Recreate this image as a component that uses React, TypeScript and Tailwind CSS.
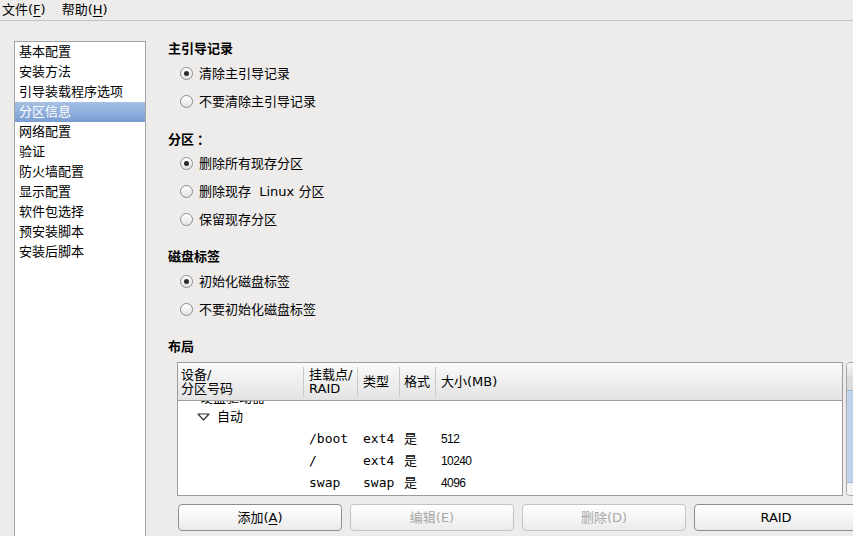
import React from 'react';

const FONT = '"DejaVu Sans", "Noto Sans CJK SC", sans-serif';

const navItems = [
  '基本配置',
  '安装方法',
  '引导装载程序选项',
  '分区信息',
  '网络配置',
  '验证',
  '防火墙配置',
  '显示配置',
  '软件包选择',
  '预安装脚本',
  '安装后脚本',
];

function Radio({ checked, label }: { checked?: boolean; label: string }) {
  return (
    <div className="h-[28px] flex items-center pl-[12px] gap-[6px]">
      <span className="w-[13px] h-[13px] rounded-full border border-[#8c8c8c] bg-gradient-to-b from-white to-[#e2e2e2] flex items-center justify-center">
        {checked && <span className="w-[5px] h-[5px] rounded-full bg-[#2a2a2a]" />}
      </span>
      <span className="text-[13px] leading-none text-black whitespace-pre">{label}</span>
    </div>
  );
}

function Heading({ children }: { children: React.ReactNode }) {
  return <div className="h-[20px] flex items-center text-[13px] font-bold text-black">{children}</div>;
}

function Mnemonic({ text, letter, after }: { text: string; letter: string; after: string }) {
  return (
    <span>
      {text}
      <span className="underline underline-offset-2">{letter}</span>
      {after}
    </span>
  );
}

function Button({ children, disabled }: { children: React.ReactNode; disabled?: boolean }) {
  return (
    <div
      className={`w-[164px] h-[27px] shrink-0 rounded-[4px] border flex items-center justify-center text-[13px] bg-gradient-to-b from-white to-[#ebebeb] ${
        disabled ? 'border-[#c4c4c4] text-[#a8a8a8]' : 'border-[#8e8e8e] text-black'
      }`}
    >
      {children}
    </div>
  );
}

const cols = ['w-[126px] pl-[3px]', 'w-[54px] pl-[5px]', 'w-[42px] pl-[5px]', 'w-[36px] pl-[4px]', 'flex-1 pl-[5px]'];

function HeaderCell({ i, children, last }: { i: number; children: React.ReactNode; last?: boolean }) {
  return (
    <div className={`${cols[i]} h-full flex items-center relative shrink-0`}>
      <div className="text-[13px] leading-[14px] text-black">{children}</div>
      {!last && <span className="absolute right-0 top-[4px] bottom-[4px] w-px bg-[#c9c9c9]" />}
    </div>
  );
}

function Row({ cells, tree }: { cells?: string[]; tree?: React.ReactNode }) {
  return (
    <div className="h-[22px] flex items-center text-black shrink-0">
      {tree ? (
        tree
      ) : (
        <>
          <div className={`${cols[0]} shrink-0`} />
          <div className={`${cols[1]} shrink-0 text-[13px]`} style={{ fontFamily: '"DejaVu Sans Mono", monospace' }}>
            {cells![0]}
          </div>
          <div className={`${cols[2]} shrink-0 text-[13px]`} style={{ fontFamily: '"DejaVu Sans Mono", monospace' }}>
            {cells![1]}
          </div>
          <div className={`${cols[3]} shrink-0 text-[13px]`}>{cells![2]}</div>
          <div className={`${cols[4]} text-[12px] tracking-[-0.6px]`} style={{ fontFamily: '"Liberation Sans", sans-serif' }}>
            {cells![3]}
          </div>
        </>
      )}
    </div>
  );
}

export default function App() {
  return (
    <div className="w-[853px] h-[536px] overflow-hidden bg-[#edeceb] text-black" style={{ fontFamily: FONT }}>
      {/* menu bar */}
      <div className="h-[21px] border-b border-[#c2c2c2] flex items-center text-[13px] pl-[2px] gap-[16px]">
        <Mnemonic text="文件(" letter="F" after=")" />
        <Mnemonic text="帮助(" letter="H" after=")" />
      </div>

      <div className="flex items-start pl-[14px] pt-[18px]">
        {/* side list */}
        <div className="w-[132px] h-[520px] mt-[2px] shrink-0 bg-white border border-[#a3a3a3]">
          {navItems.map((item) => {
            const sel = item === '分区信息';
            return (
              <div
                key={item}
                className={`h-[20px] flex items-center pl-[4px] text-[13px] ${
                  sel ? 'bg-gradient-to-b from-[#a6c1e5] to-[#7a9ed3] text-white' : 'text-black'
                }`}
              >
                {item}
              </div>
            );
          })}
        </div>

        {/* main */}
        <div className="ml-[22px] w-[700px] shrink-0">
          <Heading>主引导记录</Heading>
          <Radio checked label="清除主引导记录" />
          <Radio label="不要清除主引导记录" />

          <div className="mt-[14px]" style={{ fontFamily: '"Noto Sans CJK SC", sans-serif' }}>
            <Heading>分区 ：</Heading>
          </div>
          <Radio checked label="删除所有现存分区" />
          <Radio label="删除现存  Linux 分区" />
          <Radio label="保留现存分区" />

          <div className="mt-[14px]">
            <Heading>磁盘标签</Heading>
          </div>
          <Radio checked label="初始化磁盘标签" />
          <Radio label="不要初始化磁盘标签" />

          <div className="mt-[14px]">
            <Heading>布局</Heading>
          </div>

          <div className="flex items-start mt-[5px] ml-[9px] gap-[3px]">
            {/* table */}
            <div className="w-[666px] h-[134px] shrink-0 bg-white border border-[#9c9c9c] flex flex-col overflow-hidden">
              <div className="h-[38px] shrink-0 flex border-b border-[#a0a0a0] bg-gradient-to-b from-[#fafafa] to-[#e3e3e3]">
                <HeaderCell i={0}>
                  设备/
                  <br />
                  分区号码
                </HeaderCell>
                <HeaderCell i={1}>
                  挂载点/
                  <br />
                  RAID
                </HeaderCell>
                <HeaderCell i={2}>类型</HeaderCell>
                <HeaderCell i={3}>格式</HeaderCell>
                <HeaderCell i={4} last>
                  大小(MB)
                </HeaderCell>
              </div>
              <div className="flex-1 overflow-hidden">
                <div className="-mt-[17px]">
                  <Row tree={<div className="pl-[22px] text-[13px] relative top-[3px]">硬盘驱动器</div>} />
                  <Row
                    tree={
                      <div className="flex items-center pl-[19px] gap-[7px] text-[13px]">
                        <svg width="13" height="8" viewBox="0 0 13 8">
                          <path d="M1 1 H12 L6.5 7 Z" fill="none" stroke="#333" strokeWidth="1.2" strokeLinejoin="round" />
                        </svg>
                        <span>自动</span>
                      </div>
                    }
                  />
                  <Row cells={['/boot', 'ext4', '是', '512']} />
                  <Row cells={['/', 'ext4', '是', '10240']} />
                  <Row cells={['swap', 'swap', '是', '4096']} />
                </div>
              </div>
            </div>

            {/* scrollbar */}
            <div className="w-[14px] h-[134px] shrink-0 rounded-[4px] border border-[#a8a8a8] bg-[#ececec] flex flex-col overflow-hidden">
              <div className="h-[14px] shrink-0 bg-gradient-to-b from-[#f7f7f7] to-[#e2e2e2]" />
              <div className="h-[13px] shrink-0 bg-[#dcdcdc]" />
              <div className="flex-1 bg-gradient-to-r from-[#c4d6ef] to-[#b5cbea] border-t border-b border-[#9fb6d8]" />
              <div className="h-[12px] shrink-0 bg-[#f4f4f4]" />
            </div>
          </div>

          <div className="flex gap-[8px] mt-[8px] ml-[10px]">
            <Button>
              <Mnemonic text="添加(" letter="A" after=")" />
            </Button>
            <Button disabled>编辑(E)</Button>
            <Button disabled>删除(D)</Button>
            <Button>RAID</Button>
          </div>
        </div>
      </div>
    </div>
  );
}
